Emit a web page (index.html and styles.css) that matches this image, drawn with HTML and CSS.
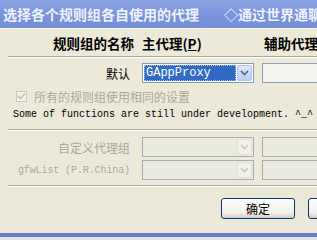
FILE: index.html
```html
<!DOCTYPE html>
<html lang="zh-CN">
<head>
    <meta charset="UTF-8">
    <title>代理设置</title>
    <link rel="stylesheet" href="styles.css">
</head>
<body>
    <div class="window">
        <div class="titlebar">
            <span class="tab">选择各个规则组各自使用的代理</span>
            <span class="tab">◇通过世界通聊</span>
        </div>

        <div class="panel">
            <div class="grid header">
                <div class="label">规则组的名称</div>
                <div>主代理(<u>P</u>)</div>
                <div class="aux">辅助代理</div>
            </div>
            <hr class="sep">

            <div class="grid row first">
                <div class="label">默认</div>
                <div class="combo">
                    <span class="value selected">GAppProxy</span>
                    <span class="drop"><svg width="9" height="6" viewBox="0 0 9 6"><path d="M1 1 L4.5 4.5 L8 1" fill="none" stroke="#4d6185" stroke-width="1.6"/></svg></span>
                </div>
                <div class="field"></div>
            </div>

            <label class="check">
                <span class="box"><svg width="9" height="8" viewBox="0 0 9 8"><path d="M1 4 L3.5 6.5 L8 1.5" fill="none" stroke="#c4c2b6" stroke-width="1.8"/></svg></span>
                所有的规则组使用相同的设置
            </label>

            <p class="note">Some of functions are still under development. ^_^</p>
            <hr class="sep">

            <div class="grid row">
                <div class="label muted">自定义代理组</div>
                <div class="combo off">
                    <span class="value"></span>
                    <span class="drop"><svg width="9" height="6" viewBox="0 0 9 6"><path d="M1 1 L4.5 4.5 L8 1" fill="none" stroke="#c9c7bc" stroke-width="1.6"/></svg></span>
                </div>
                <div class="field off"></div>
            </div>
            <div class="grid row">
                <div class="label muted mono">gfwList (P.R.China)</div>
                <div class="combo off">
                    <span class="value"></span>
                    <span class="drop"><svg width="9" height="6" viewBox="0 0 9 6"><path d="M1 1 L4.5 4.5 L8 1" fill="none" stroke="#c9c7bc" stroke-width="1.6"/></svg></span>
                </div>
                <div class="field off"></div>
            </div>
            <hr class="sep bottom">

            <div class="buttons">
                <button class="btn">确定</button>
                <button class="btn"></button>
            </div>
        </div>
        <div class="edge"></div>
    </div>
</body>
</html>
```

FILE: styles.css
```css
body {
    margin: 0;
    background-color: #ece9d8;
    font-family: "Noto Sans CJK SC", sans-serif;
    font-size: 12px;
    color: #000;
    overflow: hidden;
}
.window {
    width: 317px;
    height: 240px;
    overflow: hidden;
    display: flex;
    flex-direction: column;
}
.titlebar {
    height: 28px;
    flex-shrink: 0;
    background: linear-gradient(#8aa3e2, #7892da 60%, #7690d6);
    display: flex;
    align-items: center;
    gap: 25px;
    padding-left: 3px;
    white-space: nowrap;
    color: #eef2fc;
    font-weight: bold;
    font-size: 14px;
    border-bottom: 1px solid #f6f5ee;
}
.panel {
    flex: 1;
    min-height: 0;
    padding: 0 0 0 8px;
}
.grid {
    display: grid;
    grid-template-columns: 126px 112px 80px;
    column-gap: 8px;
    white-space: nowrap;
}
.header {
    height: 27px;
    align-items: center;
    font-weight: bold;
    font-size: 13.5px;
}
.header .label {
    text-align: right;
    padding-right: 0;
}
.header .aux {
    padding-left: 2px;
}
.header u {
    text-decoration-thickness: 1px;
}
.sep {
    margin: 0;
    border: 0;
    border-top: 1px solid #aca899;
    border-bottom: 1px solid #fff;
}
.row {
    height: 20px;
    align-items: center;
    margin-top: 3px;
}
.sep + .row {
    margin-top: 6px;
}
.row.first {
    margin-top: 5px;
}
.label {
    text-align: right;
    padding-right: 4px;
}
.muted {
    color: #aca899;
}
.mono {
    font-family: "Liberation Mono", monospace;
    font-size: 10px;
    letter-spacing: -0.1px;
}
.combo {
    height: 20px;
    box-sizing: border-box;
    border: 1px solid #7f9db9;
    background: #fff;
    display: flex;
    padding: 1px;
}
.combo .value {
    flex: 1;
}
.combo .value.selected {
    background: #316ac5;
    color: #fff;
    font-family: "Liberation Mono", monospace;
    font-size: 12px;
    line-height: 16px;
    padding-left: 2px;
    outline: 1px dotted #a9c0ea;
    outline-offset: -1px;
}
.drop {
    width: 15px;
    margin-left: 1px;
    border-radius: 2px;
    background: linear-gradient(#dfe8fd, #b9cbf4);
    border: 1px solid #b6c8f0;
    box-sizing: border-box;
    display: flex;
    align-items: center;
    justify-content: center;
}
.combo.off {
    border-color: #a5acb2;
    background: #ebeadf;
}
.combo.off .drop {
    background: #f1f0ea;
    border-color: #e3e1d6;
}
.field {
    height: 20px;
    box-sizing: border-box;
    border: 1px solid #8aa0b4;
    background: #f3f2ec;
}
.field.off {
    border-color: #a5acb2;
    background: #ebeadf;
}
.check {
    display: flex;
    align-items: center;
    gap: 7px;
    margin: 6px 0 0 8px;
    height: 14px;
    color: #aca899;
}
.box {
    width: 11px;
    height: 11px;
    box-sizing: border-box;
    border: 1px solid #c9c7ba;
    background: #f2f1ea;
    display: flex;
    align-items: center;
    justify-content: center;
}
.note {
    margin: 4px 0 7px 5px;
    height: 15px;
    font-family: "Liberation Mono", monospace;
    font-size: 10px;
    white-space: nowrap;
    line-height: 15px;
}
.sep.bottom {
    margin-top: 5px;
}
.buttons {
    display: flex;
    justify-content: flex-end;
    gap: 13px;
    margin-top: 11px;
    margin-right: -65px;
}
.btn {
    width: 74px;
    height: 21px;
    border: 1px solid #003c74;
    border-radius: 3px;
    background: linear-gradient(#fff, #f3f2ec 70%, #d6d0c5);
    font-family: "Noto Sans CJK SC", sans-serif;
    font-size: 12px;
    padding: 0;
    line-height: 17px;
    flex-shrink: 0;
}
.edge {
    height: 7px;
    border-top: 4px solid #6b7dc7;
    box-sizing: border-box;
    background: #e6e6ee;
    flex-shrink: 0;
}
```
